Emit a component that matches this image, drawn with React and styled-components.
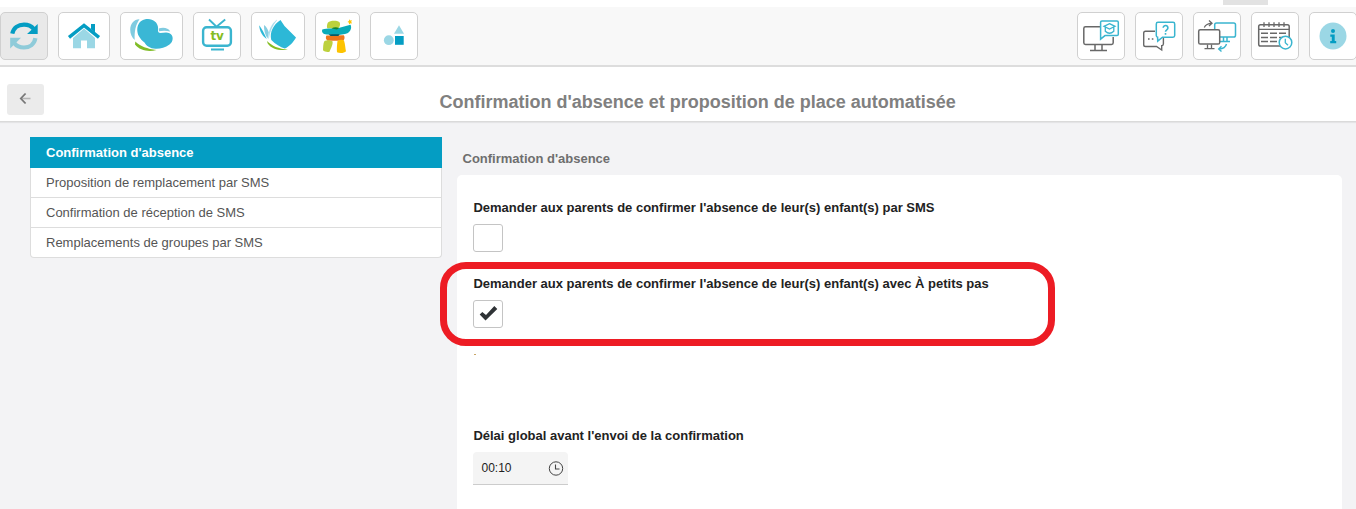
import React from "react";
import styled, { createGlobalStyle } from "styled-components";

const GlobalStyle = createGlobalStyle`
  *, *::before, *::after { box-sizing: border-box; }
  html, body { margin: 0; padding: 0; }
  body {
    background: #f3f3f5;
    font-family: "Liberation Sans", Arial, sans-serif;
    overflow: hidden;
  }
`;

const Page = styled.div`
  position: relative;
  width: 1356px;
  height: 509px;
  overflow: hidden;
  display: flex;
  flex-direction: column;
  background: #f3f3f5;
`;

const TopStrip = styled.div`
  flex: none;
  height: 7px;
  background: #fff;
  display: flex;
  justify-content: flex-end;
  padding-right: 88px;
`;

const TabHandle = styled.div`
  width: 45px;
  height: 5px;
  background: #e2e2e2;
`;

const Toolbar = styled.nav`
  flex: none;
  height: 60px;
  padding-top: 5px;
  background: #f8f8f8;
  border-bottom: 2px solid #ddd;
  display: flex;
  justify-content: space-between;
`;

const ToolGroup = styled.div`
  display: flex;
  gap: 10px;
  margin-right: ${(p) => (p.$bleed ? "-1px" : "0")};
`;

const ToolButton = styled.button`
  flex: none;
  width: ${(p) => p.$width || 48}px;
  height: 48px;
  padding: 0;
  border: 1px solid #d0d0d0;
  border-radius: 5px;
  background: ${(p) => (p.$active ? "#e9e9e9" : "#fff")};
  display: flex;
  align-items: center;
  justify-content: center;

  svg {
    flex: none;
    display: block;
  }
`;

const Header = styled.header`
  flex: none;
  height: 55px;
  padding-left: 7px;
  background: #fff;
  border-bottom: 1px solid #dadada;
  box-shadow: 0 1px 1px rgba(0, 0, 0, 0.06);
  display: flex;
  align-items: flex-start;
`;

const BackButton = styled.button`
  width: 37px;
  height: 31px;
  margin-top: 17px;
  padding: 0;
  border: 0;
  border-radius: 3px;
  background: #ebebeb;
  display: flex;
  align-items: center;
  justify-content: center;
`;

const Title = styled.h1`
  margin: 24px 0 0 395.5px;
  font-size: 18px;
  line-height: 22px;
  font-weight: bold;
  color: #808080;
  white-space: nowrap;
`;

const Main = styled.main`
  flex: 1;
  min-height: 0;
  padding: 15px 14px 0 30px;
  display: flex;
  gap: 15px;
`;

const SideMenu = styled.ul`
  flex: none;
  align-self: flex-start;
  width: 412px;
  margin: 0;
  padding: 0;
  list-style: none;
`;

const SideItem = styled.li`
  height: ${(p) => (p.$active ? 31 : 30)}px;
  padding-left: ${(p) => (p.$active ? 16 : 15)}px;
  border: ${(p) => (p.$active ? "0" : "1px solid #ddd")};
  border-top: 0;
  background: ${(p) => (p.$active ? "#049dc3" : "#fff")};
  color: ${(p) => (p.$active ? "#fff" : "#555")};
  font-size: 13px;
  font-weight: ${(p) => (p.$active ? "bold" : "normal")};
  line-height: ${(p) => (p.$active ? 31 : 29)}px;

  &:last-child { border-radius: 0 0 4px 4px; }
`;

const Content = styled.section`
  flex: 1;
  display: flex;
  flex-direction: column;
`;

const SectionTitle = styled.h2`
  margin: 0;
  height: 38px;
  padding: 12px 0 0 5.5px;
  font-size: 13px;
  line-height: 19px;
  font-weight: bold;
  color: #6e6e6e;
`;

const Card = styled.div`
  flex: 1;
  border-radius: 5px 5px 0 0;
  background: #fff;
  padding: 23px 16px 0;
  display: flex;
  flex-direction: column;
`;

const Field = styled.div`
  height: ${(p) => p.$height}px;
  display: flex;
  flex-direction: column;
  align-items: flex-start;
`;

const Label = styled.label`
  height: 26px;
  padding-left: 0.4px;
  font-size: 13px;
  line-height: 20px;
  font-weight: bold;
  color: #222;
  white-space: nowrap;
`;

const CheckBox = styled.div`
  width: 30px;
  height: 28px;
  border: 1px solid #c4c4c4;
  border-radius: 3px;
  background: #fff;
  display: flex;
  align-items: center;
  justify-content: center;
`;

const Mark = styled.div`
  width: 2px;
  height: 1px;
  margin: 26px 0 0 1px;
  background: #c9a667;
`;

const TimeInput = styled.div`
  width: 95px;
  height: 33px;
  padding: 0 4px 0 8.5px;
  border-bottom: 1px solid #ccc;
  border-radius: 4px 4px 0 0;
  background: #f4f4f4;
  display: flex;
  align-items: center;
  justify-content: space-between;
  font-size: 12px;
  color: #222;
`;

const Highlight = styled.div`
  position: absolute;
  left: 440px;
  top: 262px;
  width: 615px;
  height: 84px;
  border: 7px solid #ed1c24;
  border-radius: 26px;
`;

/* Toolbar drawings share one coordinate space, `x` is the left edge of the button. */
const Glyph = ({ x, w = 48, children }) => (
  <svg width={w - 2} height="46" viewBox={`${x + 1} 13 ${w - 2} 46`} fill="none">
    {children}
  </svg>
);

const TEAL = "#049dc3";
const PALE = "#9bd7e5";
const GREY = "#686868";
const CYAN = "#3ab5cf";

const RefreshGlyph = () => (
  <Glyph x={0}>
    <path d="M12.300 33.700C13.500 27.800 18.200 24.600 24 24.600c4 0 7.500 1.500 9.600 4.200" stroke={TEAL} strokeWidth="4.200" />
    <path d="M37.700 24v9.900h-10.600z" fill={TEAL} />
    <path d="M35.400 38.100C34.300 44.200 29.800 47.500 24 47.500c-4 0-7.500-1.500-9.600-4.300" stroke="#8fcbd9" strokeWidth="4.200" />
    <path d="M10.200 48.500v-10.700h10.800z" fill="#8fcbd9" />
  </Glyph>
);

const HomeGlyph = () => (
  <Glyph x={58} w={52}>
    <path d="M73 38L84 28.500 95 38v10.300h-8V40.500h-6v7.800h-8z" fill={PALE} />
    <path d="M91 24h4v8.500l-4-3.500z" fill={TEAL} />
    <path d="M69 37.300L84 25.500l15 11.800" stroke={TEAL} strokeWidth="3.400" />
  </Glyph>
);

const ButterflyGlyph = () => (
  <Glyph x={120} w={63}>
    <path d="M139.500 19.300c-5.200-.2-9.300 4.700-9.300 10.200 0 4.500 1.800 8 4.500 10.500-.3-8.500.8-15.100 4.800-20.700z" fill="#7fcbe0" />
    <path d="M158.700 28.500c4-1.500 9.800-1 11.500 3-3.700-1-7.700-1.100-11.200-.2z" fill="#7fcbe0" />
    <path d="M148 19C153.500 19 157.500 22.800 158 27C158.200 29.500 157.500 31.500 159 32.800C162 33.500 166 31.300 169.500 33.200C174 35.500 173.500 41.500 169.500 44.600C165 48 160 49 155.500 48.800C150 48.500 146.500 46 144.500 42.500C142.500 41 140 38.500 138.800 36C135.500 29 137.500 19 148 19z" fill="#3ab7d5" />
    <path d="M135.300 41.500c5 5 12 7.300 21.200 8.600-8 2.200-17 .4-21.500-5.500z" fill="#80bc27" />
  </Glyph>
);

const TvFrame = styled.span`
  width: 46px;
  height: 46px;
  display: grid;
  > * { grid-area: 1 / 1; }
`;

const TvText = styled.span`
  align-self: start;
  justify-self: center;
  margin: 16px 0 0 0;
  font-family: "DejaVu Sans", sans-serif;
  font-weight: bold;
  font-size: 12px;
  line-height: 14px;
  color: #84bc23;
  letter-spacing: -0.3px;
`;

const TvGlyph = () => (
  <TvFrame>
    <Glyph x={193}>
      <rect x="203.100" y="27.300" width="27.800" height="18.400" rx="3.500" stroke={CYAN} strokeWidth="2.400" />
      <path d="M209 19.500l7.500 7.200 8.700-7.200M211 49.500h13" stroke={CYAN} strokeWidth="1.900" />
    </Glyph>
    <TvText>tv</TvText>
  </TvFrame>
);

const LeafGlyph = () => (
  <Glyph x={251} w={54}>
    <path d="M280.500 20l4 6 11.500 11.500c-2.500 4.500-6.500 9-11.200 11-4.500-1.500-9.300-4.300-13.500-8.600-1.800-7.500 1.800-15.200 9.200-19.900z" fill="#2cb8d7" />
    <path d="M276.800 20c-5.500 4.300-8.300 10.600-8.300 18.600 1.100-7.200 4-13 8.300-18.600z" fill="#a5daea" stroke="#a5daea" strokeWidth=".4" />
    <path d="M264 25c2.600 2 4.200 4.500 4.800 7.600l-1.300 6c-2.500-4.200-3.700-8.400-3.500-13.600z" fill="#86cde1" />
    <path d="M259.200 25.300c2.500 3.300 4.800 7.700 7.500 13.700-4.300-3-7.200-7.500-7.500-13.700z" fill="#2cb8d7" />
    <path d="M267 41c5 5 11.500 7.800 21 8.700-8.500 1.400-16.500-.7-20.300-6.200z" fill="#84bd22" />
  </Glyph>
);

const InukshukGlyph = () => (
  <Glyph x={315} w={45}>
    <path d="M328 22.500c2-2.300 8.800-2.400 11.300-.6 1.500 1.700.6 5-1.100 6.300h-11c-.7-2 .1-4.500.8-5.700z" fill="#bdd13d" />
    <path d="M322.300 29.500c5-1.600 11.700-.7 16.200-1.500l12-3.200c1.500 2.600.3 6.800-3.100 8.500-4.200 2-14.500 2-20.500 1.300-4.200-.4-5.500-2.700-4.600-5.100z" fill="#0aabb9" />
    <path d="M331.300 28.500c2.500-1.300 5-1.600 7.700-.5l-2 1.400z" fill="#178332" />
    <path d="M326.500 35.500l17.400-.2c1.300 1.700.6 4.600-.8 5.500h-15.500c-2-1.300-2.200-4-1.100-5.300z" fill="#ed761d" />
    <path d="M328.500 34.300h11l-1 1.700h-8z" fill="#075967" />
    <path d="M324.500 41c2.300-1.400 6-.8 8 .3.700 2.800-1.300 6.700-3 10.400-2 .7-5 .2-6.500-1.400.2-3 0-7 1.500-9.300z" fill="#bdd13d" />
    <path d="M337.500 41c2-1.300 5-1.600 6.500-.5 1.300 4 1.300 8 2 10.700-1.500 2-6.500 2.300-9 1-.3-3.200 0-8 .5-11.200z" fill="#fdc300" />
    <path d="M349.500 19.300l.8 1.200 1.700-.2-.8 1.500.8 1.600-1.500-.1-1.400 1.200-.3-1.900-1.300-.7 1.400-.8z" fill="#fdc300" />
  </Glyph>
);

const ShapesGlyph = () => (
  <Glyph x={370}>
    <path d="M399 25.200l5 8.600h-10z" fill={PALE} />
    <circle cx="388.800" cy="40.200" r="4.900" fill={PALE} />
    <rect x="395" y="36" width="8.700" height="8.800" fill={TEAL} />
  </Glyph>
);

const TrainingGlyph = () => (
  <Glyph x={1077}>
    <path d="M1100 26.800h-14.500q-1.700 0-1.700 1.700v14.300q0 1.700 1.700 1.700h26q1.700 0 1.700-1.700V37M1095 45v5M1102 45v5M1090 50.500h17" stroke={GREY} strokeWidth="1.500" />
    <path d="M1102 21h15q1.300 0 1.300 1.300v12q0 1.300-1.300 1.300h-12l-4.400 3.500V22.300q0-1.300 1.400-1.300z" fill="#fff" stroke={CYAN} strokeWidth="1.500" />
    <path d="M1109.500 23.700l5.500 2.600-5.500 2.700-5.500-2.700zM1105.300 27.500v3.700c2.800 2.700 5.700 2.700 8.500 0v-3.700" stroke={CYAN} strokeWidth="1.300" />
  </Glyph>
);

const HelpGlyph = () => (
  <Glyph x={1135}>
    <path d="M1155 31.300h-9.500q-1.800 0-1.800 1.800v11.600q0 1.800 1.800 1.800h11l5.200 3.500v-4.200h.2q1.500-.3 1.500-2V38" stroke={GREY} strokeWidth="1.400" />
    <path d="M1148 39h1.600M1151.800 39h1.600" stroke={GREY} strokeWidth="1.600" />
    <path d="M1158 22.300h15q1.700 0 1.700 1.700v11.500q0 1.700-1.700 1.700h-10.500l-4.800 4-.1-4q-1.300-.3-1.300-1.700V24q0-1.700 1.700-1.700z" fill="#fff" stroke={CYAN} strokeWidth="1.500" />
    <path d="M1163.200 27.800c.1-3.200 4.800-2.900 4.700.2 0 1.800-2.400 1.800-2.400 3.800M1165.500 33v1.800" stroke={CYAN} strokeWidth="1.600" />
  </Glyph>
);

const TransferGlyph = () => (
  <Glyph x={1193}>
    <path d="M1214.700 29v-4.200q0-1.800 1.800-1.800h17.200q1.800 0 1.800 1.800v10.400q0 1.800-1.800 1.800H1220M1223.500 37.500v4M1227 37.500v4M1220 41.500h10" stroke={CYAN} strokeWidth="1.500" />
    <rect x="1198.700" y="29.700" width="21" height="14.400" rx="1.600" fill="#fff" stroke={GREY} strokeWidth="1.500" />
    <path d="M1207.500 44.500v4M1211.500 44.500v4M1204.500 48.700h10" stroke={GREY} strokeWidth="1.300" />
    <path d="M1204.300 27.500c1.200-2.500 3.500-4 7.500-4.300M1209 20.600l3 2.600-3 2.800" stroke={GREY} strokeWidth="1.300" />
    <path d="M1226.500 44c-.8 3-3 4.700-7.300 5M1221.500 46.200l-2.800 2.700 2.800 2.600" stroke={CYAN} strokeWidth="1.400" />
  </Glyph>
);

const CalendarGlyph = () => (
  <Glyph x={1251}>
    <rect x="1258.700" y="24.700" width="30.500" height="21.400" rx="1.800" stroke={GREY} strokeWidth="1.500" />
    <path d="M1259 29.300h30M1264 22.300v4.800M1269 22.300v4.800M1274 22.300v4.800M1279 22.300v4.800M1284 22.300v4.800" stroke={GREY} strokeWidth="1.300" />
    <path d="M1261 33.200h7M1270 33.200h7M1279 33.200h7M1261 37.400h7M1270 37.400h7M1261 41.600h7M1270 41.600h7M1279 37.400h7" stroke={GREY} strokeWidth="1.500" />
    <circle cx="1285.500" cy="42.600" r="6.300" fill="#fff" stroke={CYAN} strokeWidth="1.500" />
    <path d="M1285.300 38.700v4l2.700 2.600" stroke={CYAN} strokeWidth="1.300" />
  </Glyph>
);

const InfoGlyph = () => (
  <Glyph x={1309}>
    <circle cx="1333" cy="36" r="13.500" fill={PALE} />
    <circle cx="1333" cy="31" r="2" fill={TEAL} />
    <path d="M1330.300 34.500h4.400v6.500h1.500v2.200h-6v-2.200h1.600v-4.300h-1.500z" fill={TEAL} />
  </Glyph>
);

const leftTools = [
  { name: "Actualiser", glyph: RefreshGlyph, active: true },
  { name: "Accueil", glyph: HomeGlyph, width: 52 },
  { name: "Papillon", glyph: ButterflyGlyph, width: 63 },
  { name: "Télé", glyph: TvGlyph },
  { name: "Feuille", glyph: LeafGlyph, width: 54 },
  { name: "Inukshuk", glyph: InukshukGlyph, width: 45 },
  { name: "Formes", glyph: ShapesGlyph },
];

const rightTools = [
  { name: "Formation", glyph: TrainingGlyph },
  { name: "Aide", glyph: HelpGlyph },
  { name: "Transfert", glyph: TransferGlyph },
  { name: "Calendrier", glyph: CalendarGlyph },
  { name: "Information", glyph: InfoGlyph },
];

const menu = [
  "Confirmation d'absence",
  "Proposition de remplacement par SMS",
  "Confirmation de réception de SMS",
  "Remplacements de groupes par SMS",
];

const Tools = ({ items, bleed }) => (
  <ToolGroup $bleed={bleed}>
    {items.map(({ name, glyph: Icon, width, active }) => (
      <ToolButton key={name} aria-label={name} $width={width} $active={active}>
        <Icon />
      </ToolButton>
    ))}
  </ToolGroup>
);

export default function App() {
  return (
    <Page>
      <GlobalStyle />
      <TopStrip>
        <TabHandle />
      </TopStrip>
      <Toolbar>
        <Tools items={leftTools} />
        <Tools items={rightTools} bleed />
      </Toolbar>
      <Header>
        <BackButton aria-label="Retour">
          <svg width="37" height="31" viewBox="7 84 37 31" fill="none">
            <path d="M22 98.500h8.500" stroke="#b5b5b5" strokeWidth="1.600" />
            <path d="M25.600 93.500l-4.800 5 4.800 5" stroke="#777" strokeWidth="1.800" />
          </svg>
        </BackButton>
        <Title>Confirmation d'absence et proposition de place automatisée</Title>
      </Header>
      <Main>
        <SideMenu>
          {menu.map((text, i) => (
            <SideItem key={text} $active={i === 0}>
              {text}
            </SideItem>
          ))}
        </SideMenu>
        <Content>
          <SectionTitle>Confirmation d'absence</SectionTitle>
          <Card>
            <Field $height={76}>
              <Label>Demander aux parents de confirmer l'absence de leur(s) enfant(s) par SMS</Label>
              <CheckBox />
            </Field>
            <Field $height={152}>
              <Label>Demander aux parents de confirmer l'absence de leur(s) enfant(s) avec À petits pas</Label>
              <CheckBox>
                <svg width="28" height="26" viewBox="474 301 28 26">
                  <path d="M479.700 314.500l2.600-2.500 3.700 3 8.300-9 3 3-11.800 11.500z" fill="#2f3336" />
                </svg>
              </CheckBox>
              <Mark />
            </Field>
            <Field $height={60}>
              <Label>Délai global avant l'envoi de la confirmation</Label>
              <TimeInput>
                00:10
                <svg width="16" height="16" viewBox="0 0 16 16" fill="none">
                  <circle cx="8" cy="8.500" r="6.700" stroke="#444" strokeWidth="1" />
                  <path d="M7.500 4.500v4.500h4" stroke="#444" strokeWidth="1.100" />
                </svg>
              </TimeInput>
            </Field>
          </Card>
        </Content>
      </Main>
      <Highlight />
    </Page>
  );
}
